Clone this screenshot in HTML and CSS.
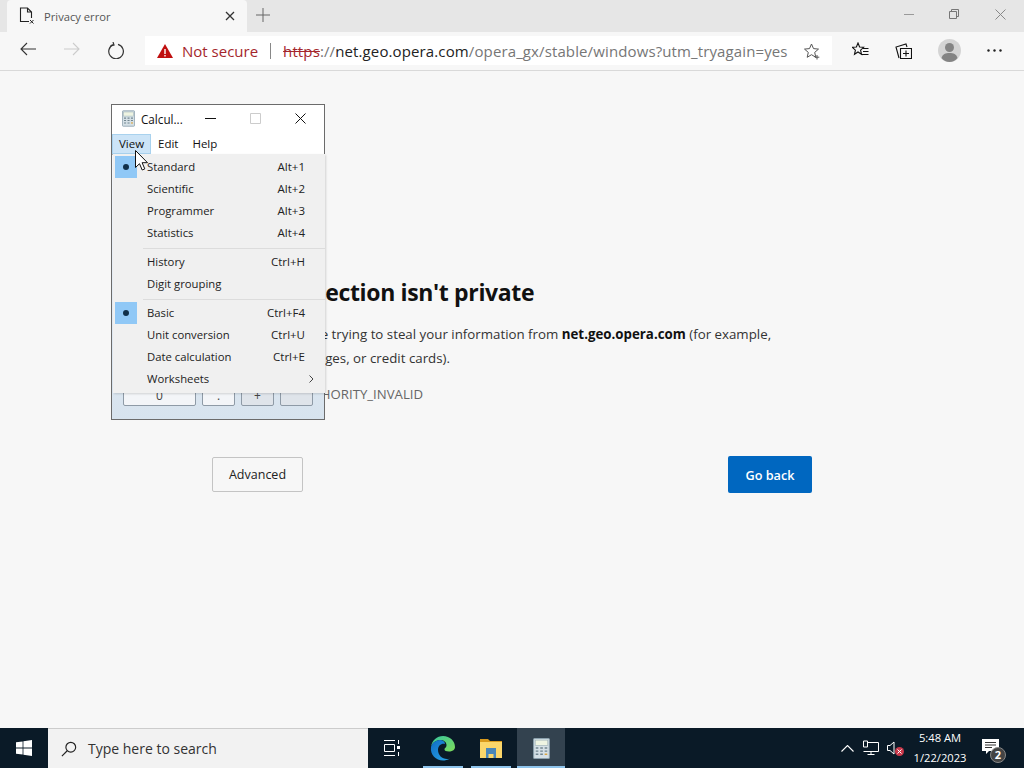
FILE: index.html
```html
<!DOCTYPE html>
<html lang="en">
<head>
    <meta charset="UTF-8">
    <title>Privacy error</title>
    <link rel="stylesheet" href="styles.css">
</head>
<body>
    <svg class="defs" width="0" height="0">
        <symbol id="calc" viewBox="0 0 16 20">
            <rect x="0.5" y="0.5" width="15" height="19" rx="1" fill="#d5e0e6" stroke="#8ba0ac"/>
            <rect x="2" y="2" width="12" height="5" fill="#eef4e2" stroke="#9db0b6" stroke-width="0.6"/>
            <path d="M2.5 9.500h2.500M6.800 9.500h2.500M11 9.500h2.500M2.500 12.500h2.500M6.800 12.500h2.500M11 12.500h2.500M2.500 15.500h2.500M6.800 15.500h2.500" stroke="#71858f" stroke-width="1.400"/>
            <path d="M11 15.500h2.500" stroke="#d9a441" stroke-width="1.400"/>
        </symbol>
    </svg>

    <div class="tabstrip">
        <div class="tab">
            <svg class="tab-icon" width="16" height="18" viewBox="0 0 16 18" fill="none" stroke="#222" stroke-width="1.1">
                <path d="M10 14.500H1.500V1h7l4 4v6M8.500 1v4h4"/>
                <path d="M11 13l3.500 3.500M14.500 13L11 16.500" stroke-width="1"/>
            </svg>
            <span class="tab-title">Privacy error</span>
            <svg class="tab-close" width="10" height="10" viewBox="0 0 10 10" stroke="#333" stroke-width="1.3"><path d="M1 1l8 8M9 1l-8 8"/></svg>
        </div>
        <svg class="new-tab" width="14" height="14" viewBox="0 0 14 14" stroke="#666" stroke-width="1"><path d="M7 0v14M0 7h14"/></svg>
        <div class="win-btns">
            <svg width="10" height="10" viewBox="0 0 10 10" stroke="#999"><path d="M0 5.500h10"/></svg>
            <svg width="10" height="10" viewBox="0 0 10 10" fill="none" stroke="#777"><path d="M0.500 2.500h7v7h-7zM2.500 2.500v-2h7v7h-2"/></svg>
            <svg width="11" height="11" viewBox="0 0 11 11" stroke="#888"><path d="M0.500 0.500l10 10M10.500 0.500l-10 10"/></svg>
        </div>
    </div>

    <div class="toolbar">
        <div class="nav-btns">
            <svg width="16" height="14" viewBox="0 0 16 14" fill="none" stroke="#333" stroke-width="1.1"><path d="M16 7H1M7 1L1 7l6 6"/></svg>
            <svg width="16" height="14" viewBox="0 0 16 14" fill="none" stroke="#ccc" stroke-width="1.1"><path d="M0 7h15M9 1l6 6-6 6"/></svg>
            <svg width="16" height="17" viewBox="0 0 16 17" fill="none" stroke="#333" stroke-width="1.2"><path d="M5.500 2.600A7.300 7.300 0 1 0 10 2.400"/><path d="M5 0l1 3-3.400 0.600"/></svg>
        </div>
        <div class="address">
            <svg width="16" height="14" viewBox="0 0 16 14"><path d="M8 0l8 14H0z" fill="#c00f0f"/><path d="M7.300 5h1.400v5H7.300zM7.300 11h1.400v1.400H7.300z" fill="#fff"/></svg>
            <span class="not-secure">Not secure</span>
            <span class="addr-sep"></span>
            <span class="url"><s class="https">https</s>://<span class="host">net.geo.opera.com</span>/opera_gx/stable/windows?utm_tryagain=yes</span>
            <svg class="star" width="17" height="17" viewBox="0 0 17 17" fill="none" stroke="#555" stroke-width="1"><path d="M7.500 1l2 4.600 5 .5-3.800 3.300 1.100 4.900-4.300-2.600-4.300 2.600 1.100-4.900L0.500 6.100l5-.5z"/><path d="M13 12v4.500M10.800 14.200h4.500"/></svg>
        </div>
        <div class="tool-btns">
            <svg width="17" height="17" viewBox="0 0 17 17" fill="none" stroke="#111" stroke-width="1.1"><path d="M6 1l1.600 4 4 .3-3 2.800.9 4.200L6 10l-3.500 2.300.9-4.200-3-2.800 4-.3z"/><path d="M11 6.500h5.500M11 9.500h5.500M9.500 12.500h7"/></svg>
            <svg width="17" height="18" viewBox="0 0 17 18" fill="none" stroke="#111" stroke-width="1.1"><path d="M4 16L1 5l10-3 1 3"/><path d="M5.500 6.500h11v10h-11zM11 8.500v6M8 11.500h6"/></svg>
            <svg class="avatar" width="23" height="23" viewBox="0 0 23 23"><circle cx="11.500" cy="11.500" r="11.500" fill="#d4d4d4"/><circle cx="11.500" cy="8.500" r="4.500" fill="#848484"/><path d="M3.500 19c1-4 4-5 8-5s7 1 8 5c-2 2.500-5 4-8 4s-6-1.500-8-4z" fill="#848484"/></svg>
            <svg width="15" height="3" viewBox="0 0 15 3" fill="#222"><circle cx="1.500" cy="1.500" r="1.200"/><circle cx="7.500" cy="1.500" r="1.200"/><circle cx="13.500" cy="1.500" r="1.200"/></svg>
        </div>
    </div>

    <div class="page">
        <div class="interstitial">
            <h1>Your connection isn't private</h1>
            <p class="desc">Attackers might be trying to steal your information from <b>net.geo.opera.com</b> (for example, passwords, messages, or credit cards).</p>
            <p class="code">NET::ERR_CERT_AUTHORITY_INVALID</p>
            <div class="actions">
                <button class="btn-adv">Advanced</button>
                <button class="btn-back">Go back</button>
            </div>
        </div>

        <div class="calc-window">
            <div class="calc-title">
                <svg class="calc-icon" width="13" height="17"><use href="#calc"/></svg>
                <span class="calc-name">Calcul...</span>
                <div class="calc-ctrls">
                    <svg width="11" height="11" viewBox="0 0 11 11" stroke="#111"><path d="M0 5.500h11"/></svg>
                    <svg width="11" height="11" viewBox="0 0 11 11" fill="none" stroke="#ccc"><path d="M0.500 0.500h10v10h-10z"/></svg>
                    <svg width="11" height="11" viewBox="0 0 11 11" stroke="#111"><path d="M0.500 0.500l10 10M10.500 0.500l-10 10"/></svg>
                </div>
            </div>
            <div class="calc-menubar">
                <span class="menu-head active">View</span>
                <span class="menu-head">Edit</span>
                <span class="menu-head">Help</span>
            </div>
            <div class="calc-body">
                <div class="calc-keys">
                    <span class="key key-zero">0</span>
                    <span class="key">.</span>
                    <span class="key key-dim">+</span>
                    <span class="key key-dim"></span>
                </div>
            </div>
            <div class="menu">
                <div class="menu-row"><i class="check"></i><span>Standard</span><kbd>Alt+1</kbd></div>
                <div class="menu-row"><span>Scientific</span><kbd>Alt+2</kbd></div>
                <div class="menu-row"><span>Programmer</span><kbd>Alt+3</kbd></div>
                <div class="menu-row"><span>Statistics</span><kbd>Alt+4</kbd></div>
                <div class="menu-sep"></div>
                <div class="menu-row"><span>History</span><kbd>Ctrl+H</kbd></div>
                <div class="menu-row"><span>Digit grouping</span></div>
                <div class="menu-sep"></div>
                <div class="menu-row"><i class="check"></i><span>Basic</span><kbd>Ctrl+F4</kbd></div>
                <div class="menu-row"><span>Unit conversion</span><kbd>Ctrl+U</kbd></div>
                <div class="menu-row"><span>Date calculation</span><kbd>Ctrl+E</kbd></div>
                <div class="menu-row"><span>Worksheets</span><svg class="submenu" width="5" height="8" viewBox="0 0 5 8" fill="none" stroke="#444"><path d="M0.500 0.500L4 4 0.500 7.500"/></svg></div>
            </div>
            <svg class="cursor" width="14" height="21" viewBox="0 0 14 21"><path d="M0.500 0.500v17l4-3.800 2.700 6.300 2.600-1.100-2.700-6.200h5.400z" fill="#fff" stroke="#111"/></svg>
        </div>
    </div>

    <div class="taskbar">
        <div class="start">
            <svg width="16" height="16" viewBox="0 0 16 16" fill="#fff"><path d="M0 2.300l6.600-.9v6.200H0zM7.400 1.300L16 0v7.600H7.400zM0 8.400h6.600v6.200L0 13.700zM7.400 8.400H16V16l-8.600-1.300z"/></svg>
        </div>
        <div class="search">
            <svg width="16" height="16" viewBox="0 0 18 18" fill="none" stroke="#222" stroke-width="1.300"><circle cx="11" cy="7" r="5.500"/><path d="M7 11l-6 6"/></svg>
            <span>Type here to search</span>
        </div>
        <div class="task-icons">
            <div class="task task-view">
                <svg width="16" height="16" viewBox="0 0 16 16" fill="none" stroke="#fff"><path d="M0 .5h11M0 15.500h11M.5 4.500h10v7H.5z"/><path d="M14.500 0v4M14.500 12v4"/><rect x="13" y="6" width="3" height="3" fill="#fff" stroke="none"/></svg>
            </div>
            <div class="task open">
                <svg width="26" height="26" viewBox="0 0 26 26">
                    <defs>
                        <linearGradient id="edgeA" x1="0" y1="0" x2="1" y2="1"><stop offset="0" stop-color="#36c6a0"/><stop offset="1" stop-color="#7fdc5a"/></linearGradient>
                        <linearGradient id="edgeB" x1="0" y1="0" x2="1" y2="1"><stop offset="0" stop-color="#0f6cc4"/><stop offset="1" stop-color="#2aa6e8"/></linearGradient>
                    </defs>
                    <path d="M1 12C2 5 7 1 13 1c7 0 12 5 12 11 0 3-3 4.500-6 4.500-3 0-4.500-1-4.500-2 0-2 2-1.500 2-4.500 0-3-3-5-6-5C6 5 2 8 1 12z" fill="url(#edgeA)"/>
                    <path d="M1 12C2 8 6 5 10 5c3 0 5 2 5 4-3-1-7 1-7 6 0 5 4 9 9 9 1 0 2 0 3-.5C17.500 25 15 25.500 13 25.500 6 25.500 0 20 1 12z" fill="url(#edgeB)"/>
                </svg>
            </div>
            <div class="task open">
                <svg width="22" height="20" viewBox="0 0 22 20">
                    <path d="M0 1h8l2 2h12v3H0z" fill="#d99a1c"/>
                    <path d="M0 4h22v16H0z" fill="#fbd66a"/>
                    <path d="M6 10h10v10h-2.500v-4h-5v4H6z" fill="#4a86b8"/>
                </svg>
            </div>
            <div class="task open current">
                <svg width="17" height="21"><use href="#calc"/></svg>
            </div>
        </div>
        <div class="tray">
            <svg class="tray-up" width="13" height="7" viewBox="0 0 13 7" fill="none" stroke="#fff" stroke-width="1.100"><path d="M.5 6.500l6-6 6 6"/></svg>
            <svg width="16" height="16" viewBox="0 0 16 16" fill="none" stroke="#fff"><path d="M4 2.500h11.500v9H.5"/><path d="M.5 1h4v6h-4zM8 11.500v3M4.500 14.500h7"/></svg>
            <div class="tray-sound">
                <svg width="9" height="14" viewBox="0 0 9 14" fill="none" stroke="#fff"><path d="M.5 4.500h2.500L7 1v12L3 9.500H.5z"/></svg>
                <svg class="mute" width="9" height="9" viewBox="0 0 9 9"><circle cx="4.500" cy="4.500" r="4.500" fill="#c9384a"/><path d="M2.500 2.500l4 4M6.500 2.500l-4 4" stroke="#fff"/></svg>
            </div>
            <div class="clock"><span>5:48 AM</span><span>1/22/2023</span></div>
            <div class="notify">
                <svg class="notify-icon" width="17" height="15" viewBox="0 0 17 15"><path d="M0 0h17v12H7l-3 3v-3H0z" fill="#fff"/><path d="M3 3.500h11M3 6h11M3 8.500h7" stroke="#333"/></svg>
                <span class="badge">2</span>
            </div>
        </div>
    </div>
</body>
</html>
```

FILE: styles.css
```css
* {
    box-sizing: border-box;
}

body {
    font-family: "Open Sans", "Noto Sans", Arial, sans-serif;
    margin: 0;
    height: 100vh;
    overflow: hidden;
    display: flex;
    flex-direction: column;
    background: #f7f7f7;
    color: #111;
}

.defs {
    position: absolute;
}

/* browser chrome */
.tabstrip {
    height: 32px;
    background: #e6e6e6;
    display: flex;
    align-items: center;
    padding-left: 7px;
    flex-shrink: 0;
}

.tab {
    width: 240px;
    height: 32px;
    background: #f7f7f7;
    border-radius: 4px 4px 0 0;
    display: flex;
    align-items: center;
    padding: 0 12px;
    gap: 9px;
}

.tab-title {
    font-size: 11.2px;
    color: #555;
    flex: 1;
}

.new-tab {
    margin: 0 0 2px 9px;
}

.win-btns {
    margin-left: auto;
    width: 138px;
    display: flex;
    justify-content: space-around;
    align-items: center;
    padding-bottom: 4px;
}

.toolbar {
    height: 39px;
    background: #f7f7f7;
    border-bottom: 1px solid #d9d9d9;
    display: flex;
    align-items: center;
    flex-shrink: 0;
    padding-bottom: 1px;
}

.nav-btns {
    width: 145px;
    padding: 0 21px 0 20px;
    display: flex;
    justify-content: space-between;
    gap: 28px;
}

.address {
    width: 687px;
    height: 29px;
    background: #fff;
    display: flex;
    align-items: center;
    padding-left: 12px;
    font-size: 15px;
    white-space: nowrap;
}

.not-secure {
    color: #a4262c;
    margin-left: 9px;
}

.addr-sep {
    width: 1px;
    height: 16px;
    background: #888;
    margin: 0 12px;
}

.url {
    color: #767676;
    flex: 1;
    letter-spacing: 0.12px;
}

.https {
    color: #a4262c;
}

.host {
    color: #222;
}

.star {
    margin: 2px 11px 0 0;
}

.tool-btns {
    flex: 1;
    display: flex;
    align-items: center;
    justify-content: space-between;
    padding: 0 22px 0 20px;
}

/* error page */
.page {
    flex: 1;
    position: relative;
    background: #f7f7f7;
}

.interstitial {
    width: 600px;
    margin-left: 212px;
    padding-top: 204px;
}

.interstitial h1 {
    font-size: 23px;
    letter-spacing: -0.35px;
    line-height: 34px;
    margin: 0;
    font-weight: 700;
    white-space: nowrap;
}

.desc {
    font-size: 13.3px;
    line-height: 24px;
    margin: 13px 0 0;
    color: #333;
}

.desc b {
    color: #111;
}

.code {
    font-size: 13.2px;
    line-height: 18px;
    margin: 15px 0 0 -14px;
    color: #666;
}

.actions {
    display: flex;
    justify-content: space-between;
    align-items: center;
    margin-top: 53px;
}

.actions button {
    font-family: inherit;
    border-radius: 2px;
}

.btn-adv {
    width: 91px;
    height: 35px;
    background: #f7f7f7;
    border: 1px solid #c4c4c4;
    color: #222;
    font-size: 12.5px;
}

.btn-back {
    width: 84px;
    height: 37px;
    background: #0067c0;
    border: none;
    color: #fff;
    font-size: 12.7px;
    font-weight: 600;
}

/* calculator window */
.calc-window {
    position: absolute;
    left: 111px;
    top: 33px;
    width: 214px;
    height: 316px;
    background: #fff;
    border: 1px solid #6b6b6b;
    display: flex;
    flex-direction: column;
}

.calc-title {
    height: 26px;
    display: flex;
    align-items: center;
    padding: 1px 0 0 10px;
    flex-shrink: 0;
}

.calc-name {
    font-size: 11.7px;
    margin-left: 6px;
    width: 48px;
    white-space: nowrap;
}

.calc-ctrls {
    flex: 1;
    display: flex;
    justify-content: space-between;
    padding: 0 18px 0 16px;
}

.calc-menubar {
    height: 23px;
    display: flex;
    align-items: flex-end;
    font-size: 11.5px;
    flex-shrink: 0;
}

.menu-head {
    padding: 0 7px;
    height: 20px;
    line-height: 20px;
}

.menu-head.active {
    background: #cce4f7;
    border: 1px solid #a9d2ee;
    padding: 0 6px;
    line-height: 18px;
    width: 39px;
}

.calc-body {
    flex: 1;
    background: linear-gradient(#f4f7fb, #d7e3ee);
    display: flex;
    align-items: flex-end;
    padding: 0 11px 13px;
    border-top: 1px solid #b5b5b5;
}

.calc-keys {
    display: flex;
    gap: 6px;
}

.key {
    height: 30px;
    width: 33px;
    background: #f3f5f8;
    border: 1px solid #8e9aa6;
    border-radius: 2px;
    font-size: 12px;
    text-align: center;
    line-height: 38px;
    color: #444;
}

.key-zero {
    width: 73px;
}

.key-dim {
    background: #dfe4ea;
}

.menu {
    position: absolute;
    left: 1px;
    top: 49px;
    width: 212px;
    background: #f0f0f0;
    padding: 2px 0 3px;
    font-size: 11.3px;
    color: #222;
    box-shadow: 1px 1px 2px rgba(0, 0, 0, 0.15);
}

.menu-row {
    height: 22px;
    display: flex;
    align-items: center;
    justify-content: space-between;
    padding: 0 20px 1px 34px;
    position: relative;
}

.menu-row kbd {
    font-family: inherit;
    font-size: 11.5px;
}

.menu-sep {
    height: 1px;
    background: #dcdcdc;
    margin: 4px 0 2px 30px;
}

.check {
    position: absolute;
    left: 2px;
    top: 0;
    width: 22px;
    height: 22px;
    background: #90c8f6;
}

.check::after {
    content: "";
    position: absolute;
    left: 8px;
    top: 8px;
    width: 6px;
    height: 6px;
    border-radius: 50%;
    background: #10304a;
}

.submenu {
    margin-right: -9px;
}

.cursor {
    position: absolute;
    left: 23px;
    top: 45px;
}

/* taskbar */
.taskbar {
    height: 40px;
    background: #0a1a27;
    display: flex;
    align-items: stretch;
    flex-shrink: 0;
}

.start {
    width: 48px;
    display: flex;
    align-items: center;
    justify-content: center;
}

.search {
    width: 320px;
    background: #f2f2f2;
    border-top: 1px solid #ccc;
    display: flex;
    align-items: center;
    padding-left: 13px;
    gap: 11px;
    font-size: 14px;
    color: #333;
}

.task-icons {
    display: flex;
}

.task {
    width: 48px;
    display: flex;
    align-items: center;
    justify-content: center;
    position: relative;
}

.task-view {
    margin-right: 3px;
}

.task.open::after {
    content: "";
    position: absolute;
    left: 4px;
    right: 4px;
    bottom: 0;
    height: 2px;
    background: #8ec4ec;
}

.task.current {
    background: #33424f;
    margin-left: 2px;
}

.task.current::after {
    left: 0;
    right: 0;
}

.tray {
    margin-left: auto;
    padding-right: 7px;
    display: flex;
    align-items: center;
    color: #fff;
}

.tray-up {
    margin-right: 9px;
}

.tray-sound {
    position: relative;
    width: 24px;
    margin-left: 8px;
    display: flex;
}

.mute {
    position: absolute;
    left: 8px;
    top: 6px;
}

.clock {
    width: 58px;
    display: flex;
    flex-direction: column;
    align-items: center;
    font-size: 11.2px;
    line-height: 20px;
    white-space: nowrap;
}

.notify {
    width: 48px;
    align-self: stretch;
    position: relative;
    display: flex;
    align-items: center;
    justify-content: center;
}

.notify-icon {
    margin: 0 5px 4px 0;
}

.badge {
    position: absolute;
    left: 21px;
    top: 19px;
    width: 16px;
    height: 16px;
    border-radius: 50%;
    background: #444;
    border: 1px solid #888;
    font-size: 11px;
    line-height: 14px;
    text-align: center;
    font-weight: 700;
}
```
